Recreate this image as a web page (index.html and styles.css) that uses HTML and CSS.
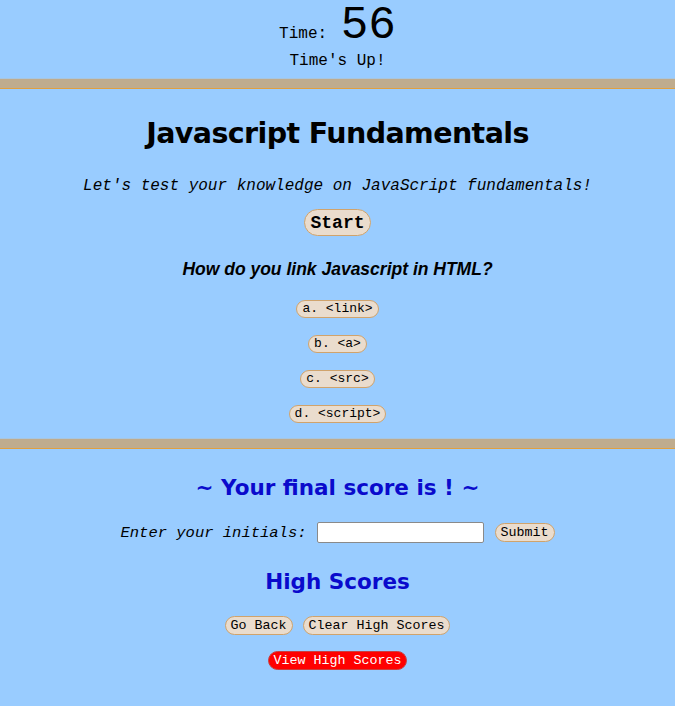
FILE: index.html
```html
<!DOCTYPE html>
<html>
<head>
<meta charset="utf-8">
<link rel="stylesheet" href="styles.css">
</head>
<body>
<header class="timer">
  <div class="time-row"><span class="time-label">Time:</span> <span class="time-value">56</span></div>
  <div class="times-up">Time's Up!</div>
</header>
<div class="divider"></div>
<section class="quiz">
  <h1 class="title">Javascript Fundamentals</h1>
  <p class="intro">Let's test your knowledge on JavaScript fundamentals!</p>
  <button class="btn btn-start">Start</button>
  <h2 class="question">How do you link Javascript in HTML?</h2>
  <div class="answers">
    <button class="btn btn-answer">a. &lt;link&gt;</button>
    <button class="btn btn-answer">b. &lt;a&gt;</button>
    <button class="btn btn-answer">c. &lt;src&gt;</button>
    <button class="btn btn-answer">d. &lt;script&gt;</button>
  </div>
</section>
<div class="divider"></div>
<section class="results">
  <h2 class="score">~ Your final score is ! ~</h2>
  <div class="initials-row">
    <label class="initials-label">Enter your initials:</label>
    <input class="initials-input" type="text">
    <button class="btn btn-small">Submit</button>
  </div>
  <h2 class="hs-title">High Scores</h2>
  <div class="hs-actions">
    <button class="btn btn-small">Go Back</button>
    <button class="btn btn-small">Clear High Scores</button>
  </div>
  <div class="hs-view">
    <button class="btn btn-small btn-red">View High Scores</button>
  </div>
</section>
</body>
</html>
```
FILE: styles.css
```css
html, body {
  margin: 0;
  padding: 0;
  background: #99ccff;
}
body {
  font-family: "Liberation Mono", "Courier New", monospace;
  color: #000;
  text-align: center;
}
.timer {
  padding-top: 4px;
  height: 78px;
  box-sizing: border-box;
}
.time-row {
  height: 44px;
  line-height: 44px;
}
.time-label {
  font-size: 16px;
  margin-right: 4px;
}
.time-value {
  font-size: 46px;
  font-weight: 300;
}
.times-up {
  font-size: 16px;
  margin-top: 4px;
}
.divider {
  height: 9px;
  background: #bfac8e;
  border-top: 1px solid #a8c6e0;
  border-bottom: 1px solid #e0a040;
}
.quiz {
  padding-top: 25px;
  height: 349px;
  box-sizing: border-box;
}
.title {
  font-family: "Comic Sans MS", "DejaVu Sans", sans-serif;
  font-size: 28.5px;
  letter-spacing: -0.6px;
  font-weight: bold;
  margin: 0;
  line-height: 40px;
}
.intro {
  font-style: italic;
  font-size: 16px;
  margin: 22px 0 0;
  line-height: 20px;
}
.btn {
  font-family: "Liberation Mono", "Courier New", monospace;
  background: #eadccd;
  border: 1px solid #d0a36c;
  border-radius: 12px;
  color: #000;
  padding: 0 5px;
  cursor: pointer;
}
.btn-start {
  margin-top: 13px;
  font-size: 18px;
  font-weight: bold;
  height: 27px;
  padding: 0 5px;
  border-radius: 14px;
}
.question {
  font-family: "Liberation Sans", Arial, sans-serif;
  font-style: italic;
  font-weight: bold;
  font-size: 17.5px;
  margin: 22px 0 0;
  line-height: 22px;
}
.answers {
  display: flex;
  flex-direction: column;
  align-items: center;
  gap: 17px;
  margin-top: 20px;
}
.btn-answer {
  font-size: 13px;
  height: 18px;
  line-height: 16px;
  padding: 0 5px;
}
.results {
  padding-top: 24px;
}
.score, .hs-title {
  font-family: "Comic Sans MS", "DejaVu Sans", sans-serif;
  font-weight: bold;
  font-size: 21.5px;
  color: #0a0acc;
  margin: 0;
  line-height: 30px;
}
.initials-row {
  display: flex;
  justify-content: center;
  align-items: center;
  margin-top: 19px;
}
.initials-label {
  font-style: italic;
  font-size: 15.5px;
  margin-right: 10px;
}
.initials-input {
  width: 167px;
  height: 21px;
  box-sizing: border-box;
  border: 1px solid #8a8a8a;
  border-radius: 2px;
  background: #fff;
  margin: 0 11px 0 0;
  padding: 0;
}
.btn-small {
  font-size: 13.33px;
  height: 19px;
  line-height: 17px;
  padding: 0 5px;
}
.hs-title {
  margin-top: 24px;
}
.hs-actions {
  display: flex;
  justify-content: center;
  gap: 10px;
  margin-top: 19px;
}
.hs-view {
  margin-top: 16px;
}
.btn-red {
  background: #ff0000;
  color: #fff;
  border-color: #c84040;
}
```
